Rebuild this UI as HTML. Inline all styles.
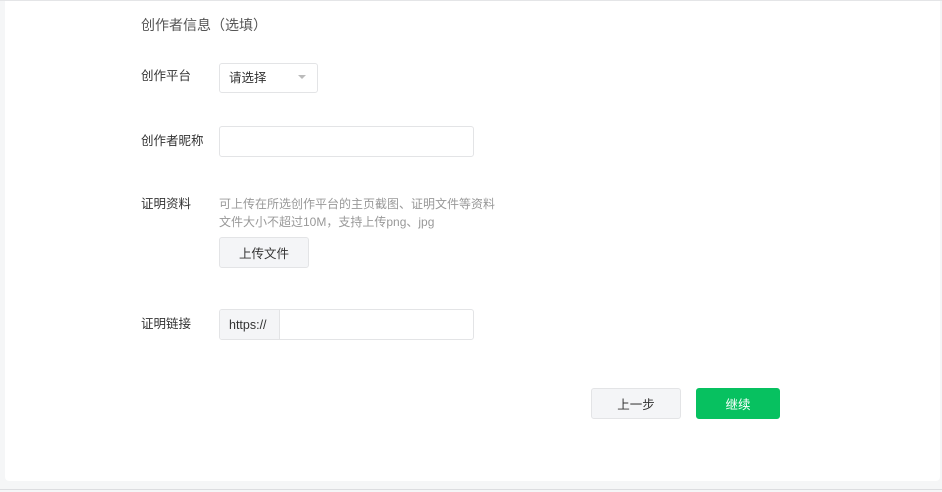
<!DOCTYPE html>
<html><head><meta charset="utf-8">
<style>
*{box-sizing:border-box;margin:0;padding:0}
html,body{width:942px;height:492px;overflow:hidden;background:#f5f6f7;font-family:"Liberation Sans","Noto Sans CJK SC",sans-serif;}
.topline{position:absolute;left:0;top:0;width:942px;height:1px;background:#e4e5e7}
.card{position:absolute;left:5px;top:1px;width:935px;height:480px;background:#fff;border-radius:0 0 4px 4px}
.botline{position:absolute;left:0;top:489px;width:942px;height:1px;background:#dcdde0}
.t{position:absolute;font-size:12.5px;color:#333;white-space:nowrap;line-height:16px}
.box{position:absolute;border:1px solid #e3e4e6;border-radius:3px;background:#fff}
.btn{position:absolute;border:1px solid #e3e4e6;border-radius:3px;background:#f4f5f7;font-size:12.5px;color:#333;display:flex;align-items:center;justify-content:center}
</style></head><body>
<div class="topline"></div>
<div class="card"></div>
<div class="botline"></div>

<div class="t" style="left:141px;top:17px;font-size:14px;color:#555">创作者信息（选填）</div>

<div class="t" style="left:141px;top:68px">创作平台</div>
<div class="box" style="left:219px;top:63px;width:99px;height:30px"></div>
<div class="t" style="left:229px;top:70px">请选择</div>
<svg style="position:absolute;left:298px;top:75px" width="8" height="5"><path d="M0 0H8L4 4Z" fill="#bbb"/></svg>

<div class="t" style="left:141px;top:133px">创作者昵称</div>
<div class="box" style="left:219px;top:126px;width:255px;height:31px"></div>

<div class="t" style="left:141px;top:196px">证明资料</div>
<div class="t" style="left:219px;top:196px;color:#999;font-size:12px">可上传在所选创作平台的主页截图、证明文件等资料</div>
<div class="t" style="left:219px;top:214px;color:#999;font-size:12px">文件大小不超过10M，支持上传png、jpg</div>
<div class="btn" style="left:219px;top:237px;width:90px;height:31px">上传文件</div>

<div class="t" style="left:141px;top:316px">证明链接</div>
<div class="box" style="left:219px;top:309px;width:255px;height:31px;overflow:hidden">
  <div style="position:absolute;left:0;top:0;width:60px;height:100%;background:#f4f5f7;border-right:1px solid #e3e4e6"></div>
</div>
<div class="t" style="left:229px;top:317px;font-size:12.5px">https://</div>

<div class="btn" style="left:591px;top:388px;width:90px;height:31px">上一步</div>
<div class="btn" style="left:696px;top:388px;width:84px;height:31px;background:#07c160;border-color:#07c160;color:#fff">继续</div>
</body></html>
